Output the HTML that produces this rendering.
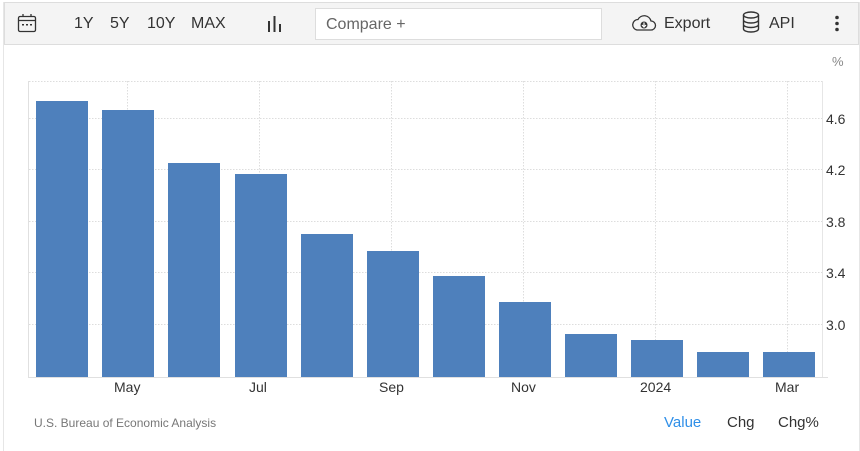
<!DOCTYPE html>
<html><head><meta charset="utf-8"><style>
body{margin:0;width:860px;height:451px;background:#fff;font-family:"Liberation Sans",sans-serif;overflow:hidden;position:relative}
.frame{position:absolute;left:3px;top:2px;width:855px;height:449px;border-left:1px solid #e6e6e6;border-right:1px solid #e6e6e6}
.tb{position:absolute;left:4px;top:2px;width:853px;height:41px;background:#f4f4f4;border:1px solid #ddd;}
.t{position:absolute;top:12px;font-size:16px;color:#333}
.cmp{position:absolute;left:310px;top:5px;width:287px;height:32px;background:#fff;border:1px solid #ddd;box-sizing:border-box;font-size:16px;color:#666;padding:7px 10px}
.ax{position:absolute;font-size:14px;color:#333}
</style></head><body>
<div class="frame"></div>
<div class="tb">
<svg style="position:absolute;left:12px;top:10px" width="20" height="20" viewBox="0 0 20 20"><rect x="1.5" y="3.5" width="17" height="15" rx="1.5" fill="none" stroke="#333" stroke-width="1.3"/><line x1="1.5" y1="7.5" x2="18.5" y2="7.5" stroke="#333" stroke-width="1.3"/><line x1="6" y1="1" x2="6" y2="4" stroke="#333" stroke-width="1.3"/><line x1="14" y1="1" x2="14" y2="4" stroke="#333" stroke-width="1.3"/><rect x="5" y="11" width="2" height="1.5" fill="#333"/><rect x="9" y="11" width="2" height="1.5" fill="#333"/><rect x="13" y="11" width="2" height="1.5" fill="#333"/></svg>
<span class="t" style="left:69px">1Y</span><span class="t" style="left:105px">5Y</span><span class="t" style="left:142px">10Y</span><span class="t" style="left:186px">MAX</span>
<svg style="position:absolute;left:262px;top:12px" width="16" height="18"><rect x="1" y="6" width="2" height="11" fill="#333"/><rect x="6.5" y="1" width="2" height="16" fill="#333"/><rect x="12" y="9" width="2" height="8" fill="#333"/></svg>
<div class="cmp">Compare +</div>
<svg style="position:absolute;left:626px;top:10px" width="26" height="20" viewBox="0 0 26 20"><path d="M6 17 H20 A4.5 4.5 0 0 0 20 8 A7 7 0 0 0 7 6.5 A5.3 5.3 0 0 0 6 17 Z" fill="none" stroke="#333" stroke-width="1.3"/><circle cx="13" cy="12" r="3.5" fill="#333"/><path d="M13 9.5 V14 M11 12 L13 14 L15 12" stroke="#fff" stroke-width="1.2" fill="none"/></svg>
<span class="t" style="left:659px">Export</span>
<svg style="position:absolute;left:737px;top:8px" width="18" height="22" viewBox="0 0 18 22"><ellipse cx="9" cy="4" rx="7.5" ry="3" fill="none" stroke="#333" stroke-width="1.4"/><path d="M1.5 4 V18 A7.5 3 0 0 0 16.5 18 V4 M1.5 9 A7.5 3 0 0 0 16.5 9 M1.5 13.5 A7.5 3 0 0 0 16.5 13.5" fill="none" stroke="#333" stroke-width="1.4"/></svg>
<span class="t" style="left:764px">API</span>
<svg style="position:absolute;left:829px;top:12px" width="6" height="18"><circle cx="3" cy="2.5" r="1.8" fill="#333"/><circle cx="3" cy="8.5" r="1.8" fill="#333"/><circle cx="3" cy="14.5" r="1.8" fill="#333"/></svg>
</div>
<svg style="position:absolute;left:0;top:0" width="860" height="451">
<g stroke="#ddd" stroke-width="1" stroke-dasharray="1.5,1.5">
<line x1="29" y1="81.5" x2="822" y2="81.5"/><line x1="29" y1="118.5" x2="822" y2="118.5"/><line x1="29" y1="169.5" x2="822" y2="169.5"/><line x1="29" y1="221.5" x2="822" y2="221.5"/><line x1="29" y1="272.5" x2="822" y2="272.5"/><line x1="29" y1="324.5" x2="822" y2="324.5"/>
<line x1="127.5" y1="81" x2="127.5" y2="377"/><line x1="259.5" y1="81" x2="259.5" y2="377"/><line x1="391.5" y1="81" x2="391.5" y2="377"/><line x1="523.5" y1="81" x2="523.5" y2="377"/><line x1="655.5" y1="81" x2="655.5" y2="377"/><line x1="787.5" y1="81" x2="787.5" y2="377"/>
</g>
<line x1="28.5" y1="81" x2="28.5" y2="377" stroke="#e0e0e0"/>
<line x1="28" y1="377.5" x2="828" y2="377.5" stroke="#e0e0e0"/>
<line x1="822.5" y1="81" x2="822.5" y2="377" stroke="#e6e6e6"/>
<g fill="#4e80bc">
<rect x="36" y="101" width="52" height="276"/><rect x="102" y="110" width="52" height="267"/><rect x="168" y="163" width="52" height="214"/><rect x="235" y="174" width="52" height="203"/><rect x="301" y="234" width="52" height="143"/><rect x="367" y="251" width="52" height="126"/><rect x="433" y="276" width="52" height="101"/><rect x="499" y="302" width="52" height="75"/><rect x="565" y="334" width="52" height="43"/><rect x="631" y="340" width="52" height="37"/><rect x="697" y="352" width="52" height="25"/><rect x="763" y="352" width="52" height="25"/>
</g>
</svg>
<span class="ax" style="left:832px;top:54px;font-size:13px;color:#888">%</span>
<span class="ax" style="left:826px;top:111px">4.6</span><span class="ax" style="left:826px;top:162px">4.2</span><span class="ax" style="left:826px;top:214px">3.8</span><span class="ax" style="left:826px;top:265px">3.4</span><span class="ax" style="left:826px;top:317px">3.0</span>
<span class="ax" style="left:114px;top:379px">May</span><span class="ax" style="left:249px;top:379px">Jul</span><span class="ax" style="left:379px;top:379px">Sep</span><span class="ax" style="left:511px;top:379px">Nov</span><span class="ax" style="left:640px;top:379px">2024</span><span class="ax" style="left:775px;top:379px">Mar</span>
<span class="ax" style="left:34px;top:416px;font-size:12px;color:#777">U.S. Bureau of Economic Analysis</span>
<span class="ax" style="left:664px;top:414px;font-size:15px;color:#2f8fe8">Value</span>
<span class="ax" style="left:727px;top:414px;font-size:15px">Chg</span>
<span class="ax" style="left:778px;top:414px;font-size:15px">Chg%</span>
</body></html>
